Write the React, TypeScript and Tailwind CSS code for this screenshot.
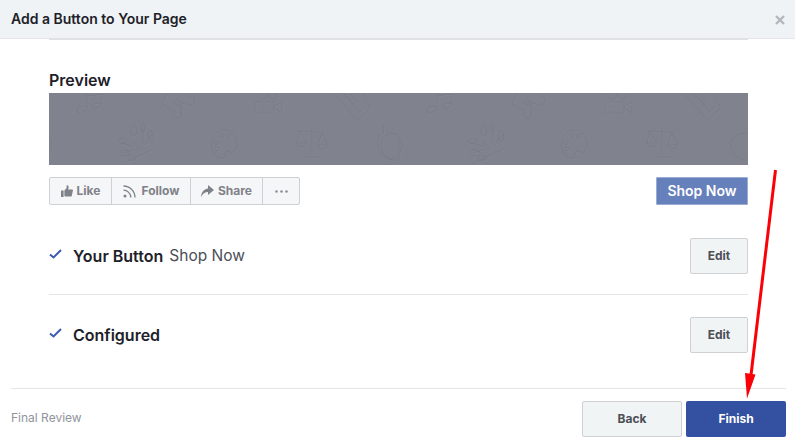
import type { ReactNode } from 'react';

const fontStyle = "font-['Inter','Liberation_Sans',sans-serif]";

function ThumbIcon() {
  return (
    <svg viewBox="0 0 12 12" className="h-3 w-3 fill-[#7f8288]">
      <path d="M0 5.500h2.600V12H0zM3.400 5.600 5.600 3V.4c1.200-.4 2 .4 2 1.600 0 .8-.2 1.600-.5 2.400h3.700c.9 0 1.300.7 1.100 1.400l-1.200 5.200c-.1.4-.5.6-.9.6H5c-.6 0-1.100-.2-1.600-.6z" />
    </svg>
  );
}

function RssIcon() {
  return (
    <svg viewBox="0 0 13 13" className="h-[13px] w-[13px] fill-none stroke-[#7f8288]" strokeWidth="1.300">
      <path d="M.5 5.200a7.300 7.300 0 0 1 7.300 7.300M.5 1a11.500 11.500 0 0 1 11.500 11.500" />
      <circle cx="2" cy="11" r="1.500" className="fill-[#7f8288] stroke-none" />
    </svg>
  );
}

function ShareIcon() {
  return (
    <svg viewBox="0 0 13 12" className="h-3 w-[13px] fill-[#7f8288]">
      <path d="M7 0l6 5-6 5V7C4 7 1.800 8.500 0 12c.3-4.600 2.700-8 7-8.500z" />
    </svg>
  );
}

function CheckIcon() {
  return (
    <svg viewBox="0 0 13 10" className="-mt-[4px] h-2.5 w-[13px] fill-none stroke-[#3b5bb0]" strokeWidth="2">
      <path d="M1 5.500l3.500 3L12 1" />
    </svg>
  );
}

function DotsIcon() {
  return (
    <svg viewBox="0 0 13 3" className="h-[3px] w-[13px] fill-[#8d9095]">
      <circle cx="1.500" cy="1.500" r="1.300" />
      <circle cx="6.500" cy="1.500" r="1.300" />
      <circle cx="11.500" cy="1.500" r="1.300" />
    </svg>
  );
}

// one tile of the embossed icons, repeats every 350px
function PatternTile() {
  return (
    <>
      {/* music note */}
      <path d="M38 0v15c-1 4-9 7-10 3-1-3 5-6 10-4M53 0v11c-1 4-8 6-9 3-1-3 4-5 9-3M38 3l15-2" />
      {/* ticket */}
      <path d="M119 0l-6 11 12 7c-1 3 1 7 4 7s4-3 3-6l1-3-3-7 7 2c3 3 9 1 9-3 0-3-2-5-4-5M124 9l8 5M127 6l8 5" />
      {/* camera */}
      <path d="M206 9h19v11h-19zM225 14l8-5v11l-8-5M209 0c0 4 2 6 5 6s5-3 4-6M219 0c0 4 2 6 5 6s5-3 4-6M213 14h4" />
      {/* book */}
      <path d="M286 2l23 26 13-13-7-15M294 0l17 19 5-6M301 1l8 9M298 3l8 9" />
      {/* apple */}
      <path d="M-16 32l1 8c-9 2-8 20 4 26 8 2 14-6 14-14 0-8-9-14-15-12M-7 38l5-6" />
      <path d="M334 46c4-6 12-6 16-4v25h-7c-9-3-13-13-9-21z" />
      {/* tree */}
      <path d="M105 56L77 69M83 47l9 10M94 36v14M103 42l-7 10M72 50l14 4M74 60l14-4" />
      <ellipse cx="85" cy="38" rx="3" ry="5" />
      <ellipse cx="94" cy="35" rx="2" ry="4" />
      <ellipse cx="102" cy="43" rx="2.500" ry="5" />
      <ellipse cx="74" cy="48" rx="4" ry="2.500" />
      <ellipse cx="76" cy="60" rx="5" ry="3" />
      <ellipse cx="83" cy="65" rx="4" ry="2.500" />
      {/* palette */}
      <path d="M174 37c9-1 15 7 14 15-1 6-4 9-7 7-3-2-5 0-5 3 0 3-2 4-5 3-7-3-9-10-8-16 1-6 5-11 11-12z" />
      <circle cx="167" cy="50" r="2" />
      <circle cx="168" cy="56" r="2" />
      <circle cx="173" cy="42" r="2" />
      <circle cx="180" cy="43" r="2" />
      {/* scales */}
      <path d="M263 33v29M254 64h20M249 38l27 2M251 38l-3 12h10zM273 40l-4 12h10zM248 50c1 5 9 5 10 0M269 52c1 5 9 5 10 0" />
    </>
  );
}

function CoverPattern() {
  return (
    <svg viewBox="0 0 699 72" className="h-[72px] w-full fill-none" strokeWidth="1">
      <g className="stroke-[#868994]" transform="translate(0.7 0.7)">
        <PatternTile />
        <g transform="translate(350 0)">
          <PatternTile />
        </g>
      </g>
      <g className="stroke-[#7a7d88]">
        <PatternTile />
        <g transform="translate(350 0)">
          <PatternTile />
        </g>
      </g>
    </svg>
  );
}

function ActionCell({ children, className }: { children: ReactNode; className: string }) {
  return (
    <div className={`flex h-full items-center border-r border-[#ced0d4] last:border-r-0 ${className}`}>
      {children}
    </div>
  );
}

function EditButton() {
  return (
    <button
      type="button"
      className="h-9 w-[58px] rounded-[2px] border border-[#ced0d4] bg-[#f1f4f5] text-xs font-bold text-[#4b4f56]"
    >
      Edit
    </button>
  );
}

function App() {
  return (
    <div className={`relative flex h-[446px] w-[795px] flex-col overflow-hidden bg-white ${fontStyle}`}>
      <header className="flex h-[39px] shrink-0 items-center justify-between border-b border-[#e3e5e8] bg-[#f0f3f5] pl-[11px] pr-[10px]">
        <h1 className="text-sm font-semibold text-[#1d2129]">Add a Button to Your Page</h1>
        <svg viewBox="0 0 10 10" className="mt-[1px] h-2.5 w-2.5 stroke-[#b4b7bd]" strokeWidth="2.400">
          <path d="M1 1l8 8M9 1l-8 8" />
        </svg>
      </header>

      <main className="mr-[47px] ml-[49px] h-[349px] shrink-0">
        <div className="-mt-[1px] h-0.5 bg-[#e0e1e2]" />
        <h2 className="mt-[31px] text-base leading-[18px] font-semibold text-[#1d2129]">Preview</h2>
        <div className="mt-1 h-[72px] bg-[#80838e]">
          <CoverPattern />
        </div>

        <div className="mt-3 flex items-start justify-between">
          <div className="flex h-7 items-center rounded-[2px] border border-[#ced0d4] bg-[#f5f6f7] text-xs font-bold text-[#7f8288]">
            <ActionCell className="w-[62px] justify-center gap-[4px]">
              <ThumbIcon />
              <span>Like</span>
            </ActionCell>
            <ActionCell className="w-[79px] justify-center gap-[6px]">
              <RssIcon />
              <span>Follow</span>
            </ActionCell>
            <ActionCell className="w-[72px] justify-center gap-[4px]">
              <ShareIcon />
              <span>Share</span>
            </ActionCell>
            <ActionCell className="w-[36px] justify-center">
              <DotsIcon />
            </ActionCell>
          </div>
          <button
            type="button"
            className="h-7 w-[92px] rounded-[1px] border border-[#9aabd4] bg-[#6680bb] text-sm font-semibold text-white"
          >
            Shop Now
          </button>
        </div>

        <div className="mt-[33px] flex h-9 items-center justify-between">
          <div className="flex items-center">
            <CheckIcon />
            <span className="ml-[11px] text-base font-semibold text-[#1d2129]">Your Button</span>
            <span className="ml-1.5 text-[15.5px] text-[#4b4f56]">Shop Now</span>
          </div>
          <EditButton />
        </div>
        <div className="mt-5 h-px bg-[#e4e5e7]" />
        <div className="mt-[22px] flex h-9 items-center justify-between">
          <div className="flex items-center">
            <CheckIcon />
            <span className="ml-[11px] text-base font-semibold text-[#1d2129]">Configured</span>
          </div>
          <EditButton />
        </div>
      </main>

      <footer className="mr-[9px] ml-[11px] flex items-start justify-between border-t border-[#e4e5e7] pt-3">
        <span className="mt-[9px] text-xs leading-[15px] text-[#90949c]">Final Review</span>
        <div className="flex gap-1">
          <button
            type="button"
            className="h-9 w-[100px] rounded-[2px] border border-[#ced0d4] bg-[#f1f4f5] text-xs font-bold text-[#4b4f56]"
          >
            Back
          </button>
          <button type="button" className="h-9 w-[100px] rounded-[2px] bg-[#3451a1] text-xs font-bold text-white">
            Finish
          </button>
        </div>
      </footer>

      {/* annotation arrow laid over the screenshot */}
      <svg viewBox="0 0 795 446" className="pointer-events-none absolute inset-0 h-[446px] w-[795px]">
        <path d="M775.500 170 751 375" stroke="#fb0007" strokeWidth="3" fill="none" />
        <path d="M745 373l10.500 1.500-8.500 24z" fill="#fb0007" />
      </svg>
    </div>
  );
}

export default App;
